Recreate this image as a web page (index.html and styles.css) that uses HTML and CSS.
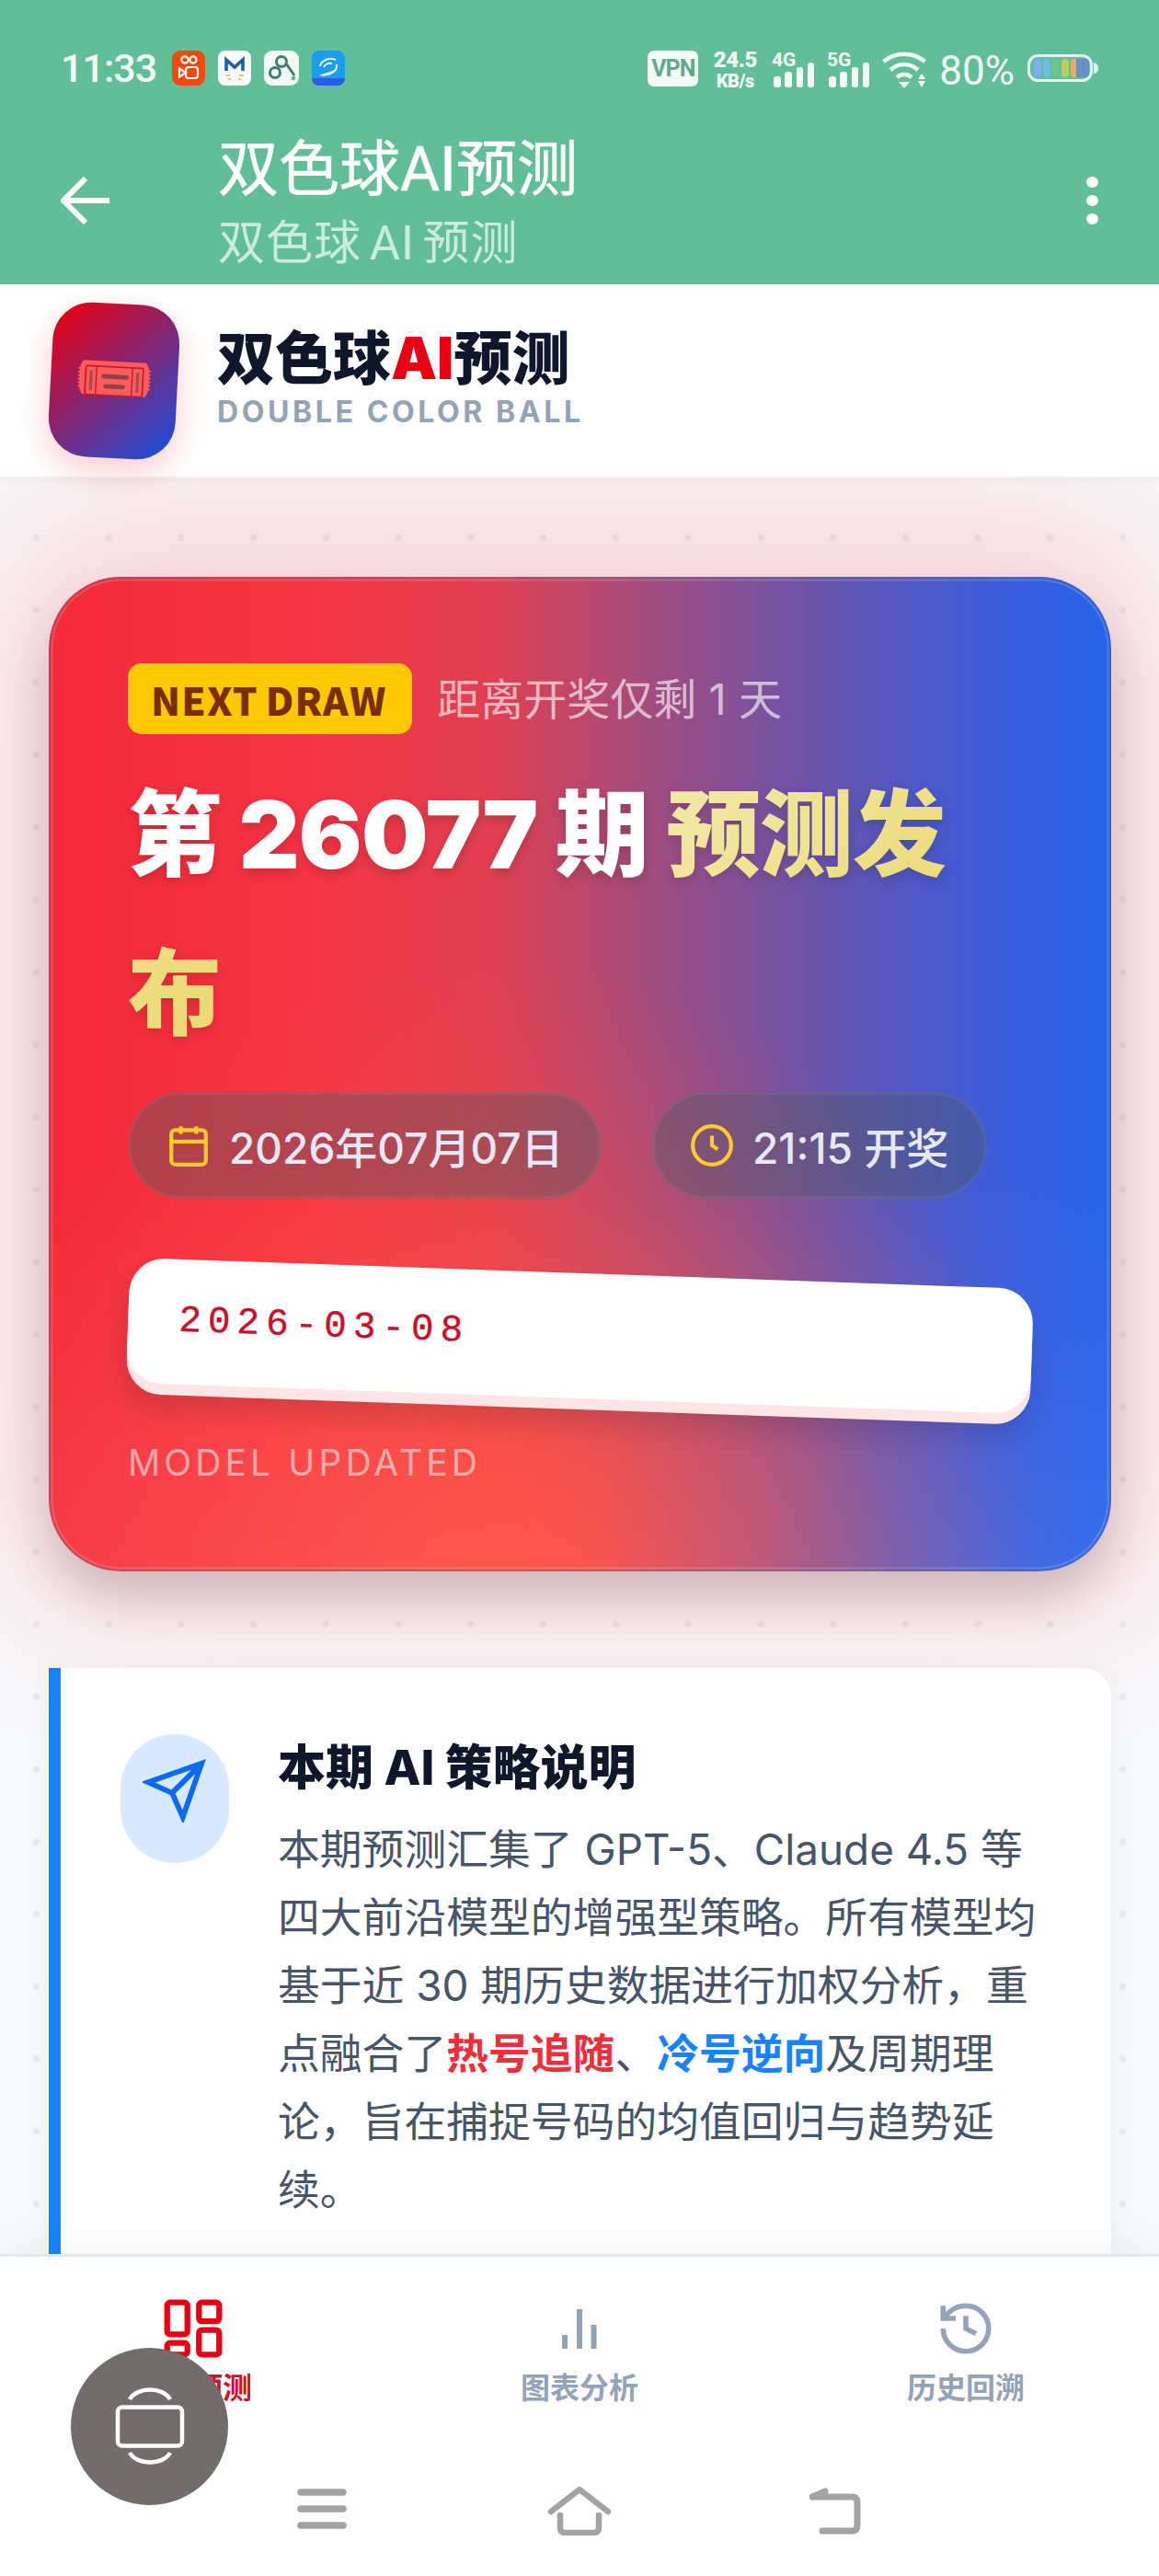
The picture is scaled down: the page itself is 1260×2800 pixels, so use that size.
FILE: index.html
```html
<!DOCTYPE html>
<html lang="zh-CN">
<head>
<meta charset="utf-8">
<title>双色球AI预测</title>
<link rel="stylesheet" href="styles.css">
</head>
<body>
<div class="screen">
  <header class="appbar">
    <div class="status">
      <div class="status-left">
        <span class="time">11:33</span>
        <svg class="app-icon wide-36" viewBox="0 0 36 38"><rect width="36" height="38" rx="9" fill="#f04a0c"/><g fill="none" stroke="#fff" stroke-width="2.2"><circle cx="14" cy="10" r="3.6"/><circle cx="23" cy="10" r="3.6"/><rect x="15" y="18" width="13" height="12" rx="3"/><path d="M15 24 8 19.5v9z"/></g></svg>
        <svg class="app-icon wide-36" viewBox="0 0 36 38"><rect width="36" height="38" rx="8" fill="#f8fbfa"/><path d="M9 22V10l9 8 9-8v12" fill="none" stroke="#1f5fa8" stroke-width="3.6"/><path d="M8 27h5M23 27h5M11 31h3M22 31h3" stroke="#e8b04a" stroke-width="1.4"/></svg>
        <svg class="app-icon wide-38" viewBox="0 0 38 38"><rect width="38" height="38" rx="9" fill="#f1f8f5"/><g fill="none" stroke="#3e7f6a" stroke-width="3"><circle cx="19" cy="12" r="5.5"/><circle cx="12" cy="24" r="5.5"/><path d="M24 14l9 13"/></g><circle cx="32" cy="30" r="2.4" fill="#7da99a"/></svg>
        <svg class="app-icon wide-36" viewBox="0 0 36 38"><rect width="36" height="38" rx="8" fill="#1c9cec"/><path d="M0 30h36a8 8 0 0 1-8 8H8a8 8 0 0 1-8-8z" fill="#2a5ee0"/><g fill="none" stroke="#fff" stroke-width="1.8"><path d="M9 17c1-6 9-10 17-7"/><path d="M13 18c1-3 5-5 9-4"/><path d="M27 15c1 6-4 11-15 12"/></g><path d="M8 27c6-3 13-3 19-8-2 6-8 9-19 8z" fill="#e8f6ff"/></svg>
      </div>
      <div class="status-right">
        <span class="vpn">VPN</span>
        <span class="speed"><b>24.5</b><b class="speed-unit">KB/s</b></span>
        <svg class="signal" viewBox="0 0 46 42"><text x="0" y="17" class="signal-text">4G</text><g fill="#f2fbf7"><rect x="2" y="28" width="8" height="12" rx="3"/><rect x="14" y="23" width="8" height="17" rx="3"/><rect x="27" y="18" width="7" height="22" rx="3"/><rect x="39" y="13" width="7" height="27" rx="3"/></g></svg>
        <svg class="signal" viewBox="0 0 46 42"><text x="0" y="17" class="signal-text">5G</text><g fill="#f2fbf7"><rect x="2" y="28" width="8" height="12" rx="3"/><rect x="14" y="23" width="8" height="17" rx="3"/><rect x="27" y="18" width="7" height="22" rx="3"/><rect x="39" y="13" width="7" height="27" rx="3"/></g></svg>
        <svg class="wifi" viewBox="0 0 48 40"><g fill="none" stroke="#f2fbf7" stroke-width="4.5"><path d="M1.500 11C14 0 34 0 46.500 11"/><path d="M9 20c9-8 21-8 30 0"/><path d="M16 28c5-4 11-4 16 0"/></g><path d="M18 33h12l-6 7z" fill="#f2fbf7"/><path d="M39 30l4-6 4 6zM39 32h8l-4 7z" fill="#f2fbf7"/></svg>
        <span class="battery-text">80%</span>
        <svg class="battery" viewBox="0 0 77 30"><rect x="1.500" y="1.500" width="68" height="27" rx="10" fill="none" stroke="#e4f3f4" stroke-width="3"/><path d="M72 9c3 0 5 3 5 6s-2 6-5 6z" fill="#e4f3f4"/><rect x="7" y="5" width="8" height="20" rx="4" fill="#80aff0"/><rect x="17" y="5" width="8" height="20" rx="4" fill="#69bfe8"/><rect x="27" y="5" width="8" height="20" rx="4" fill="#6fc487"/><rect x="37" y="5" width="8" height="20" rx="4" fill="#b5cf60"/><rect x="47" y="5" width="7" height="20" rx="3" fill="#f0a860"/><path d="M53 5h10a4 4 0 0 1 4 4v12a4 4 0 0 1-4 4H53z" fill="#6690c8"/></svg>
      </div>
    </div>
    <div class="toolbar">
      <svg class="back" viewBox="0 0 54 52"><path d="M53 26H4M27 2 3 26l24 24" fill="none" stroke="#fff" stroke-width="6"/></svg>
      <div class="toolbar-titles">
        <div class="toolbar-title">双色球AI预测</div>
        <div class="toolbar-sub">双色球 AI 预测</div>
      </div>
      <div class="more"><i></i><i></i><i></i></div>
    </div>
  </header>

  <section class="brand">
    <div class="logo">
      <svg class="ticket" viewBox="0 0 82 50"><path d="M6 3 76 3l3 5v2l3 2-3 2 3 2-3 2 3 2-3 2 3 2-3 2 3 2-3 2 3 2-3 2v2l-3 5H6l-3-5v-2l-3-2 3-2-3-2 3-2-3-2 3-2-3-2 3-2-3-2 3-2-3-2 3-2V8z" fill="#fd5b5c"/><rect x="9" y="9" width="64" height="32" rx="2" fill="none" stroke="#c21c2e" stroke-width="1.800"/><path d="M21 9v32M61 9v32" stroke="#c21c2e" stroke-width="1.500"/><path d="M15 14v22M67 14v22" stroke="#a84a58" stroke-width="3.500"/><path d="M29 20h26" stroke="#8e4148" stroke-width="5" stroke-linecap="round"/><path d="M32 31h19" stroke="#8e4148" stroke-width="5" stroke-linecap="round"/></svg>
    </div>
    <div class="brand-text">
      <div class="brand-title">双色球<span class="brand-ai">AI</span>预测</div>
      <div class="brand-sub">DOUBLE COLOR BALL</div>
    </div>
  </section>

  <main class="content">
    <article class="hero">
      <div class="hero-meta">
        <span class="badge">NEXT DRAW</span>
        <span class="countdown">距离开奖仅剩 1 天</span>
      </div>
      <h1 class="hero-title">第 26077 期 <span class="gold">预测发布</span></h1>
      <div class="pills">
        <div class="pill pill-date">
          <svg class="pill-icon" viewBox="0 0 24 24"><rect x="3" y="4" width="18" height="18" rx="2"/><path d="M16 2v4M8 2v4M3 10h18"/></svg>
          <span>2026年07月07日</span>
        </div>
        <div class="pill pill-time">
          <svg class="pill-icon" viewBox="0 0 24 24"><circle cx="12" cy="12" r="10"/><path d="M12 7v5l3 2"/></svg>
          <span>21:15 开奖</span>
        </div>
      </div>
      <div class="slab"><span class="slab-date">2026-03-08</span></div>
      <div class="updated">MODEL UPDATED</div>
    </article>

    <article class="info">
      <div class="info-icon">
        <svg viewBox="0 0 24 24"><path d="M22 2 15 22l-4-9-9-4z"/><path d="M22 2 11 13"/></svg>
      </div>
      <div class="info-body">
        <h2 class="info-title">本期 AI 策略说明</h2>
        <p class="info-text">本期预测汇集了 GPT-5、Claude 4.5 等四大前沿模型的增强型策略。所有模型均基于近 30 期历史数据进行加权分析，重点融合了<b class="hot">热号追随</b>、<b class="cold">冷号逆向</b>及周期理论，旨在捕捉号码的均值回归与趋势延续。</p>
      </div>
    </article>
  </main>

  <nav class="bottom">
    <div class="tabs">
      <div class="tab tab-active">
        <svg class="tab-icon" viewBox="1.500 1.500 21 21"><rect x="3" y="3" width="7" height="11" rx="1"/><rect x="14" y="3" width="7" height="6.500" rx="1"/><rect x="14" y="12.500" width="7" height="8.500" rx="1"/><rect x="3" y="17" width="7" height="4" rx="1"/></svg>
        <span>智能预测</span>
      </div>
      <div class="tab">
        <svg class="tab-icon tab-chart" viewBox="0 0 66 66"><path d="M17 40v15M33 12v43M48.500 29v26"/></svg>
        <span>图表分析</span>
      </div>
      <div class="tab">
        <svg class="tab-icon" viewBox="0 0 24 24"><path d="M3 12a9 9 0 1 0 9-9 9.750 9.750 0 0 0-6.740 2.740L3 8"/><path d="M3 3v5h5"/><path d="M12 7v5l4 2"/></svg>
        <span>历史回溯</span>
      </div>
    </div>
    <div class="sysnav">
      <svg class="sys-icon" viewBox="0 0 60 50"><path d="M7 5h46M7 23h46M7 41h46" stroke-width="7.500"/></svg>
      <svg class="sys-icon" viewBox="0 0 70 54"><path d="M4 28 35 4l31 24M14 32v14c0 3 2 5 5 5h32c3 0 5-2 5-5V32" stroke-width="6.500"/></svg>
      <svg class="sys-icon" viewBox="0 0 60 54"><path d="M3 12 17 6M4 12h42c4 0 6 2 6 6v25c0 4-2 6-6 6H14" stroke-width="7"/></svg>
    </div>
  </nav>

  <button class="float-btn" aria-label="切换">
    <svg viewBox="0 0 76 84"><rect x="3" y="20.500" width="70" height="42" rx="5" fill="none" stroke="#fff" stroke-width="4.500"/><path d="M16 12C24-2 52-2 60 12M16 70c8 14 36 14 44 0" fill="none" stroke="#fff" stroke-width="4.500"/></svg>
  </button>
</div>
</body>
</html>
```
FILE: styles.css
```css
* { box-sizing: border-box; }

html, body { margin: 0; padding: 0; background: #fff; }

body {
  font-family: Inter, "Noto Sans CJK SC", sans-serif;
}

.screen {
  position: relative;
  width: 1260px;
  height: 2800px;
  display: flex;
  flex-direction: column;
  overflow: hidden;
}

/* App bar */
.appbar {
  height: 309px;
  flex: none;
  background: #62be98;
  display: flex;
  flex-direction: column;
}

.status {
  height: 110px;
  flex: none;
  padding: 53px 66px 0;
  display: flex;
  justify-content: space-between;
  align-items: flex-start;
}

.status-left { display: flex; align-items: center; gap: 14px; height: 42px; }

.time {
  font: 500 43px/42px Roboto, sans-serif;
  color: #f2fbf7;
  width: 107px;
  letter-spacing: -1px;
  white-space: nowrap;
}

.app-icon { height: 38px; flex: none; }
.wide-36 { width: 36px; }
.wide-38 { width: 38px; }

.status-right { display: flex; align-items: flex-start; gap: 14px; }

.vpn {
  width: 55px;
  height: 39px;
  margin-top: 2px;
  border-radius: 7px;
  background: #f2fbf7;
  color: #62a98b;
  font: 700 25px/39px Roboto, sans-serif;
  letter-spacing: -1px;
  text-align: center;
}

.speed {
  width: 52px;
  display: flex;
  flex-direction: column;
  align-items: center;
  color: #f2fbf7;
  font: 700 24px/24px Roboto, sans-serif;
  letter-spacing: -0.5px;
}

.speed-unit { font-size: 20px; line-height: 20px; margin-top: 1px; }

.signal { width: 46px; height: 42px; margin-top: 2px; flex: none; overflow: visible; }

.signal-text {
  font: 700 21px Roboto, sans-serif;
  fill: #f2fbf7;
}

.wifi { width: 48px; height: 40px; margin-top: 3px; flex: none; }

.battery-text {
  font: 400 44px/42px Roboto, sans-serif;
  color: #f2fbf7;
  margin-top: 3px;
}

.battery { width: 77px; height: 30px; margin-top: 6px; flex: none; }

.toolbar {
  flex: 1;
  padding: 17px 66px 0;
  display: flex;
  align-items: center;
}

.back { width: 54px; height: 52px; flex: none; margin-right: 117px; }

.toolbar-titles { flex: 1; padding-top: 6px; }

.toolbar-title {
  font: 400 66px/74px Roboto, "Noto Sans CJK SC", sans-serif;
  color: #fff;
  -webkit-text-stroke: 0.6px #fff;
}

.toolbar-sub {
  margin-top: 13px;
  font: 400 51px/60px Roboto, "Noto Sans CJK SC", sans-serif;
  color: #c9ecdc;
  letter-spacing: 1px;
  word-spacing: -5px;
}

.more { display: flex; flex-direction: column; gap: 8px; }
.more i { display: block; width: 13px; height: 12px; border-radius: 50%; background: #fff; }

/* Brand */
.brand {
  height: 211px;
  flex: none;
  position: relative;
  z-index: 2;
  padding: 0 0 0 55px;
  display: flex;
  align-items: center;
  gap: 43px;
  background: #fff;
  border-bottom: 2px solid #eef0f3;
  box-shadow: 0 2px 6px rgba(15, 23, 42, 0.04);
}

.logo {
  width: 138px;
  height: 168px;
  flex: none;
  border-radius: 42px;
  background: linear-gradient(135deg, #e60012 5%, #1d4ed8 95%);
  transform: rotate(3deg);
  box-shadow: 0 14px 36px rgba(230, 0, 18, 0.2);
  display: flex;
  align-items: center;
  justify-content: center;
}

.ticket { width: 80px; height: 49px; }

.brand-text { padding-bottom: 11px; }

.brand-title {
  font-size: 63px;
  line-height: 76px;
  font-weight: 900;
  color: #0f172a;
}

.brand-ai { color: #e60012; }

.brand-sub {
  margin-top: 3px;
  font-size: 32px;
  line-height: 36px;
  font-weight: 700;
  color: #94a3b8;
  letter-spacing: 3.6px;
}

/* Content */
.content {
  flex: 1;
  min-height: 0;
  overflow: hidden;
  padding: 107px 52px 0 53px;
  background-color: #f8f9fb;
  background-image: radial-gradient(circle, #e9ebf0 3px, rgba(233, 235, 240, 0) 4.500px);
  background-size: 78.750px 78.750px;
  background-position: 0 25px;
}

.hero {
  position: relative;
  height: 1081px;
  padding: 94px 86px 0;
  border-radius: 78px;
  background:
    linear-gradient(to top, rgba(255, 255, 255, 0.07), rgba(255, 255, 255, 0) 40%),
    radial-gradient(ellipse 50% 62% at 43% 100%, rgba(255, 72, 60, 1) 0%, rgba(255, 72, 60, 0.9) 15%, rgba(255, 72, 60, 0.68) 30%, rgba(255, 72, 60, 0.5) 45%, rgba(255, 72, 60, 0.18) 75%, rgba(255, 72, 60, 0) 100%),
    linear-gradient(90deg, #f42a38 0%, #f53545 25%, #e04052 42%, #a04d80 57%, #6055b2 75%, #3f5bd8 88%, #2563eb 100%);
  box-shadow:
    inset 0 0 0 2.500px rgba(0, 0, 60, 0.2),
    inset 0 0 0 4.500px rgba(255, 255, 255, 0.16),
    0 -10px 160px 60px rgba(255, 70, 80, 0.2),
    0 28px 50px rgba(15, 23, 42, 0.2);
}

.hero-meta { display: flex; align-items: center; gap: 27px; }

.badge {
  height: 77px;
  padding: 0 28px 0 25px;
  border-radius: 15px;
  background: #ffc800;
  color: #7a2e00;
  font: 900 42px/77px "Noto Sans CJK SC", sans-serif;
  letter-spacing: 1.200px;
  word-spacing: -3px;
}

.countdown {
  font-size: 47px;
  line-height: 75px;
  color: rgba(255, 255, 255, 0.65);
}

.hero-title {
  margin: 23px 0 20px;
  font-size: 102px;
  line-height: 173px;
  font-weight: 900;
  color: #fff;
  letter-spacing: -0.800px;
  text-shadow: 0 5px 12px rgba(0, 0, 0, 0.16);
}

.gold {
  background: linear-gradient(135deg, #f3e9a8 0%, #ead870 100%);
  -webkit-background-clip: text;
  background-clip: text;
  color: transparent;
  text-shadow: none;
  filter: drop-shadow(0 4px 6px rgba(0, 0, 0, 0.14));
}

.pills { display: flex; gap: 55px; }

.pill {
  height: 116px;
  display: flex;
  align-items: center;
  gap: 19px;
  border-radius: 58px;
  background: rgba(80, 90, 100, 0.4);
  border: 3px solid rgba(255, 255, 255, 0.06);
  font-size: 46px;
  font-weight: 500;
  color: #e6e8f8;
}

.pill-date { width: 515px; padding: 0 0 0 38px; }
.pill-time { width: 364px; padding: 0 0 0 37px; }

.pill-icon {
  width: 50px;
  height: 50px;
  flex: none;
  fill: none;
  stroke: #ffcb2e;
  stroke-width: 2;
}

.slab {
  height: 136px;
  margin-top: 81px;
  padding-left: 55px;
  display: flex;
  align-items: center;
  border-radius: 38px;
  background: #fff;
  transform: rotate(2deg);
  box-shadow: 0 12px 0 #fde4e6, 0 26px 30px rgba(20, 20, 40, 0.16);
}

.slab-date {
  font: 400 41px/48px "Liberation Mono", monospace;
  color: #c9102a;
  letter-spacing: 7px;
  -webkit-text-stroke: 0.4px #c9102a;
  margin-bottom: 2px;
}

.updated {
  margin-top: 48px;
  font-size: 39px;
  line-height: 44px;
  letter-spacing: 4.100px;
  color: rgba(255, 255, 255, 0.55);
}

.info {
  position: relative;
  z-index: 1;
  margin-top: 105px;
  padding: 72px 62px 120px 65px;
  display: flex;
  align-items: flex-start;
  gap: 53px;
  background: #fff;
  border-left: 13px solid #1a82ff;
  border-radius: 0 32px 32px 0;
  box-shadow: 0 4px 30px rgba(15, 23, 42, 0.05);
}

.info-icon {
  width: 118px;
  height: 140px;
  flex: none;
  border-radius: 59px;
  background: #d8e9fd;
  display: flex;
  align-items: center;
  justify-content: center;
}

.info-icon svg {
  width: 70px;
  height: 70px;
  margin-bottom: 18px;
  fill: none;
  stroke: #0a6cf0;
  stroke-width: 2;
}

.info-body { flex: 1; min-width: 0; }

.info-title {
  margin: 0 0 15px;
  font-size: 52px;
  line-height: 74px;
  font-weight: 800;
  color: #0f172a;
}

.info-text {
  margin: 0;
  font-size: 45.800px;
  line-height: 74px;
  color: #475569;
}

.hot { color: #ef2e3c; font-weight: 700; }
.cold { color: #1a82ff; font-weight: 700; }

/* Bottom navigation */
.bottom {
  height: 350px;
  flex: none;
  position: relative;
  z-index: 2;
  background: #fff;
  border-top: 3px solid #e2e8f0;
  box-shadow: 0 -14px 40px rgba(15, 23, 42, 0.03);
}

.tabs {
  padding-top: 45px;
  display: grid;
  grid-template-columns: repeat(3, 1fr);
}

.tab {
  display: flex;
  flex-direction: column;
  align-items: center;
  gap: 12px;
  font-size: 32px;
  line-height: 40px;
  font-weight: 700;
  color: #94a3b8;
}

.tab-icon {
  width: 66px;
  height: 66px;
  fill: none;
  stroke: #94a3b8;
  stroke-width: 2;
}

.tab-chart { stroke-width: 6; }

.tab-active { color: #d0112b; }
.tab-active .tab-icon { stroke: #e60012; }

.sysnav {
  margin-top: 86px;
  display: grid;
  grid-template-columns: repeat(3, 280px);
  justify-content: center;
  justify-items: center;
}

.sys-icon {
  width: 60px;
  height: 54px;
  fill: none;
  stroke: #a3a3a3;
  stroke-linecap: round;
  stroke-linejoin: round;
}

.sysnav .sys-icon:nth-child(2) { width: 70px; }

/* Floating button */
.float-btn {
  position: absolute;
  left: 77px;
  top: 2552px;
  z-index: 3;
  width: 171px;
  height: 171px;
  padding: 0;
  border: 0;
  border-radius: 50%;
  background: #736c6c;
  display: flex;
  align-items: center;
  justify-content: center;
}

.float-btn svg { width: 76px; height: 84px; overflow: visible; }
```
